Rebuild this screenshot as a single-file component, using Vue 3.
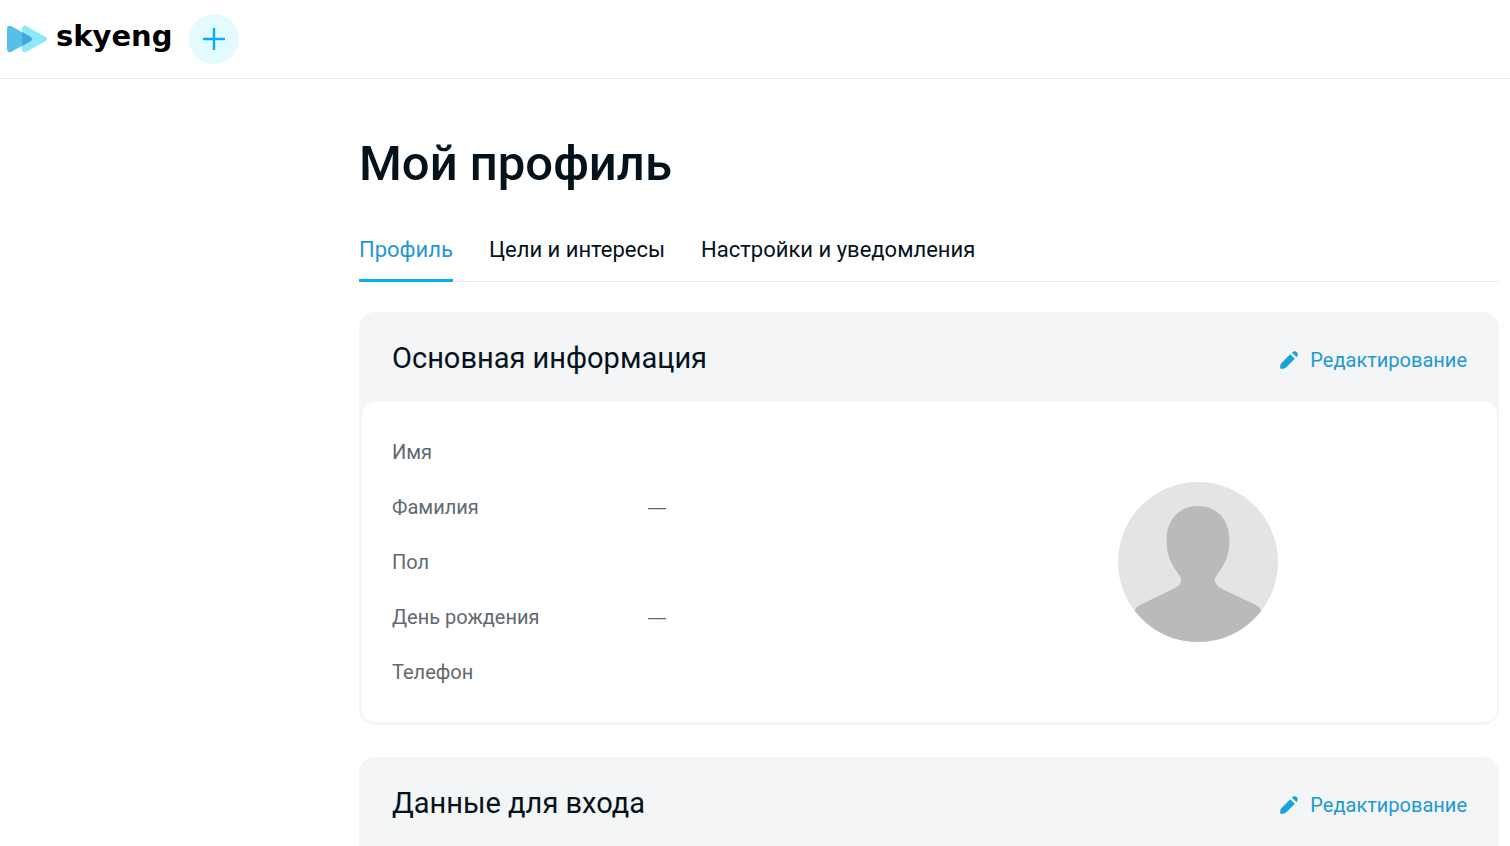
<script setup>
const tabs = ['Профиль', 'Цели и интересы', 'Настройки и уведомления']

const fields = [
  { label: 'Имя', value: '' },
  { label: 'Фамилия', value: '—' },
  { label: 'Пол', value: '' },
  { label: 'День рождения', value: '—' },
  { label: 'Телефон', value: '' },
]

const cards = [
  { title: 'Основная информация', fields, avatar: true },
  { title: 'Данные для входа', fields: [], avatar: false },
]
</script>

<template>
  <div class="page">
    <header class="topbar">
      <a class="logo" href="#">
        <svg class="logo-mark" viewBox="0 0 40 28" aria-hidden="true">
          <path d="M15 3.5C15 1 17.300 0 19.500 1.200L38.300 11.800C40.500 13 40.500 15 38.300 16.200L19.500 26.800C17.300 28 15 27 15 24.500Z" fill="#8de8fa" />
          <path d="M0 3.500C0 1 2.300 0 4.500 1.200L23.300 11.800C25.500 13 25.500 15 23.300 16.200L4.500 26.800C2.300 28 0 27 0 24.500Z" fill="#55c0e8" />
          <path d="M15 7.100L23.300 11.800C25.500 13 25.500 15 23.300 16.200L15 20.900Z" fill="#43a7db" />
        </svg>
        <span class="logo-text">skyeng</span>
      </a>
      <button class="add" type="button" aria-label="Добавить">
        <svg viewBox="0 0 24 24" aria-hidden="true">
          <path d="M12 1V23M1 12H23" fill="none" stroke="#00aeff" stroke-width="2.400" />
        </svg>
      </button>
    </header>

    <main class="content">
      <h1>Мой профиль</h1>

      <nav class="tabs">
        <a v-for="(tab, i) in tabs" :key="tab" href="#" class="tab" :class="{ active: i === 0 }">{{ tab }}</a>
      </nav>

      <section v-for="card in cards" :key="card.title" class="card">
        <div class="card-head">
          <h2>{{ card.title }}</h2>
          <button class="edit" type="button">
            <svg viewBox="0 0 18 18" aria-hidden="true">
              <path d="M10.200 3.200L14.800 7.800L6 16.400C4.800 17.600 2.500 18 0.300 17.700C0 15.500 0.400 13.200 1.600 12ZM11.800 1.700L13 0.700C14.200 -0.100 15.700 0.100 16.700 1.100L16.900 1.300C17.900 2.300 18.100 3.800 17.300 5L16.300 6.200C15.200 4.400 13.600 2.800 11.800 1.700Z" fill="#16a2dd" />
            </svg>
            <span>Редактирование</span>
          </button>
        </div>
        <div class="card-body">
          <dl class="fields">
            <div v-for="field in card.fields" :key="field.label" class="field">
              <dt>{{ field.label }}</dt>
              <dd>{{ field.value }}</dd>
            </div>
          </dl>
          <div v-if="card.avatar" class="avatar">
            <svg viewBox="0 0 160 160" role="img" aria-label="Фото профиля">
              <circle cx="80" cy="80" r="80" fill="#e4e4e4" />
              <path d="M80 24C99 24 111.500 38 111.500 58C111.500 71 108 80 101 90C98 94 96.700 96 96.700 98C96.700 102 100 105 105 107.500L136 122C141 124.500 143 126.500 143 129.300A80 80 0 0 1 17 129.300C17 126.500 19 124.500 24 122L53 108C60 105 63 102 63 98C63 96 62 94 59 90C52 80 48.500 71 48.500 58C48.500 38 61 24 80 24Z" fill="#bababa" />
            </svg>
          </div>
        </div>
      </section>
    </main>
  </div>
</template>

<style>
body {
  background: #fff;
}

html {
  scrollbar-width: none;
}
</style>

<style scoped>
.page {
  height: 100vh;
  overflow: hidden;
  color: #04121b;
  font-family: Roboto, 'Noto Sans', sans-serif;
}

.topbar {
  display: flex;
  align-items: center;
  gap: 16px;
  height: 78px;
  padding: 0 7px;
  border-bottom: 1px solid #e9ebec;
}

.logo {
  display: flex;
  align-items: center;
  gap: 9px;
  color: #000;
  text-decoration: none;
}

.logo-mark {
  width: 40px;
  height: 28px;
}

.logo-text {
  width: 117px;
  padding-bottom: 6px;
  font: 700 29px/32px 'DejaVu Sans', sans-serif;
}

.add {
  display: flex;
  align-items: center;
  justify-content: center;
  width: 50px;
  height: 50px;
  padding: 0;
  border: 0;
  border-radius: 50%;
  background: #e3fbff;
}

.add svg {
  width: 24px;
  height: 24px;
}

.content {
  padding: 52px 11px 0 359px;
}

h1 {
  margin: 0;
  font-size: 49px;
  line-height: 66px;
  font-weight: 500;
}

.tabs {
  display: flex;
  gap: 36px;
  margin: 36px 0 30px;
  border-bottom: 1px solid #e9ebec;
}

.tab {
  margin-bottom: -1px;
  padding-bottom: 12px;
  border-bottom: 3px solid transparent;
  color: inherit;
  font-size: 22px;
  line-height: 34px;
  text-decoration: none;
}

.tab.active {
  border-color: #00aeff;
  color: #1f98d4;
}

.card {
  margin-bottom: 32px;
  padding: 0 2px 3px 3px;
  border-radius: 16px;
  background: #f3f5f7;
}

.card-head {
  display: flex;
  align-items: center;
  justify-content: space-between;
  height: 90px;
  padding: 0 30px;
}

h2 {
  margin: 0;
  padding-top: 2px;
  font-size: 29px;
  line-height: 40px;
  font-weight: 400;
}

.edit {
  display: flex;
  align-items: center;
  gap: 12px;
  padding: 6px 0 0;
  border: 0;
  background: none;
  color: #1f98d4;
  font: 400 20px/28px Roboto, 'Noto Sans', sans-serif;
}

.edit svg {
  width: 18px;
  height: 18px;
}

.card-body {
  display: flex;
  padding: 36px 30px;
  border-radius: 13px;
  background: #fff;
}

.fields {
  flex: 1;
  display: grid;
  gap: 27px;
  margin: 0;
  color: #5f696f;
  font-size: 20px;
  line-height: 28px;
}

.field {
  display: grid;
  grid-template-columns: 256px 1fr;
}

dd {
  margin: 0;
  font-family: 'Liberation Sans', sans-serif;
  font-size: 18px;
}

.avatar {
  display: flex;
  flex: 1;
  align-items: center;
  justify-content: center;
}

.avatar svg {
  width: 160px;
  height: 160px;
}
</style>
